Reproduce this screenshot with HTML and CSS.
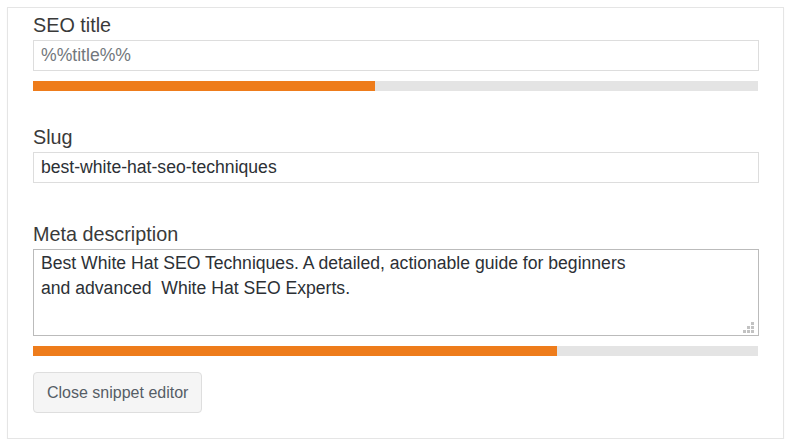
FILE: index.html
```html
<!DOCTYPE html>
<html lang="en">
<head>
<meta charset="utf-8">
<title>Snippet editor</title>
<link rel="stylesheet" href="styles.css">
</head>
<body>
<div class="card">
  <label class="field-label label-title" for="seo-title">SEO title</label>
  <input id="seo-title" class="text-input" type="text" placeholder="%%title%%">
  <div class="progress"><div class="progress-fill" style="width:47.2%"></div></div>

  <label class="field-label label-slug" for="slug">Slug</label>
  <input id="slug" class="text-input" type="text" value="best-white-hat-seo-techniques">

  <label class="field-label label-meta" for="meta">Meta description</label>
  <div class="textarea-wrap">
    <textarea id="meta" class="text-area">Best White Hat SEO Techniques. A detailed, actionable guide for beginners
and advanced  White Hat SEO Experts.</textarea>
    <svg class="grip" width="11" height="11" viewBox="0 0 11 11" aria-hidden="true">
      <rect x="8" y="0" width="3" height="3"/>
      <rect x="4" y="4" width="3" height="3"/>
      <rect x="8" y="4" width="3" height="3"/>
      <rect x="0" y="8" width="3" height="3"/>
      <rect x="4" y="8" width="3" height="3"/>
      <rect x="8" y="8" width="3" height="3"/>
    </svg>
  </div>
  <div class="progress"><div class="progress-fill" style="width:72.3%"></div></div>

  <button class="btn" type="button">Close snippet editor</button>
</div>
</body>
</html>
```

FILE: styles.css
```css
* { box-sizing: border-box; }

html, body {
  margin: 0;
  padding: 0;
  background: #ffffff;
  font-family: "Liberation Sans", Arial, sans-serif;
}

.card {
  margin: 7px 0 0 7px;
  width: 777px;
  height: 432px;
  border: 1px solid #e5e5e5;
  box-shadow: 0 1px 1px rgba(0, 0, 0, 0.06);
  background: #fff;
  padding: 5px 24px 25px 25px;
  display: flex;
  flex-direction: column;
  align-items: flex-start;
}

.field-label {
  display: block;
  font-size: 19.8px;
  line-height: 24px;
  color: #3a3a3a;
}

.label-slug { margin-top: 34px; }
.label-meta { margin-top: 39px; }

.text-input {
  display: block;
  margin: 3px 0 0;
  width: 726px;
  height: 31px;
  border: 1px solid #dddddd;
  border-radius: 0;
  padding: 0 7px;
  font-family: "Liberation Sans", Arial, sans-serif;
  font-size: 17.6px;
  color: #2c3035;
  background: #fff;
  outline: none;
}

.text-input::placeholder {
  color: #72777c;
  opacity: 1;
}

.textarea-wrap {
  position: relative;
  margin-top: 3px;
  width: 726px;
  height: 87px;
}

.text-area {
  display: block;
  width: 100%;
  height: 100%;
  margin: 0;
  border: 1px solid #bbbbbb;
  border-radius: 0;
  padding: 1px 7px;
  font-family: "Liberation Sans", Arial, sans-serif;
  font-size: 17.6px;
  line-height: 25px;
  color: #2c3035;
  resize: none;
  outline: none;
  overflow: hidden;
}

.grip {
  position: absolute;
  right: 5px;
  bottom: 3px;
  fill: #c2c2c2;
}

.progress {
  margin-top: 10px;
  width: 725px;
  height: 10px;
  background: #e4e4e4;
}

.progress-fill {
  height: 100%;
  background: #ee7c1b;
}

.btn {
  margin-top: 16px;
  height: 41px;
  padding: 0 13px;
  border: 1px solid #dedede;
  border-radius: 4px;
  background: #f5f5f5;
  color: #555d66;
  font-family: "Liberation Sans", Arial, sans-serif;
  font-size: 16px;
  cursor: pointer;
}
```
